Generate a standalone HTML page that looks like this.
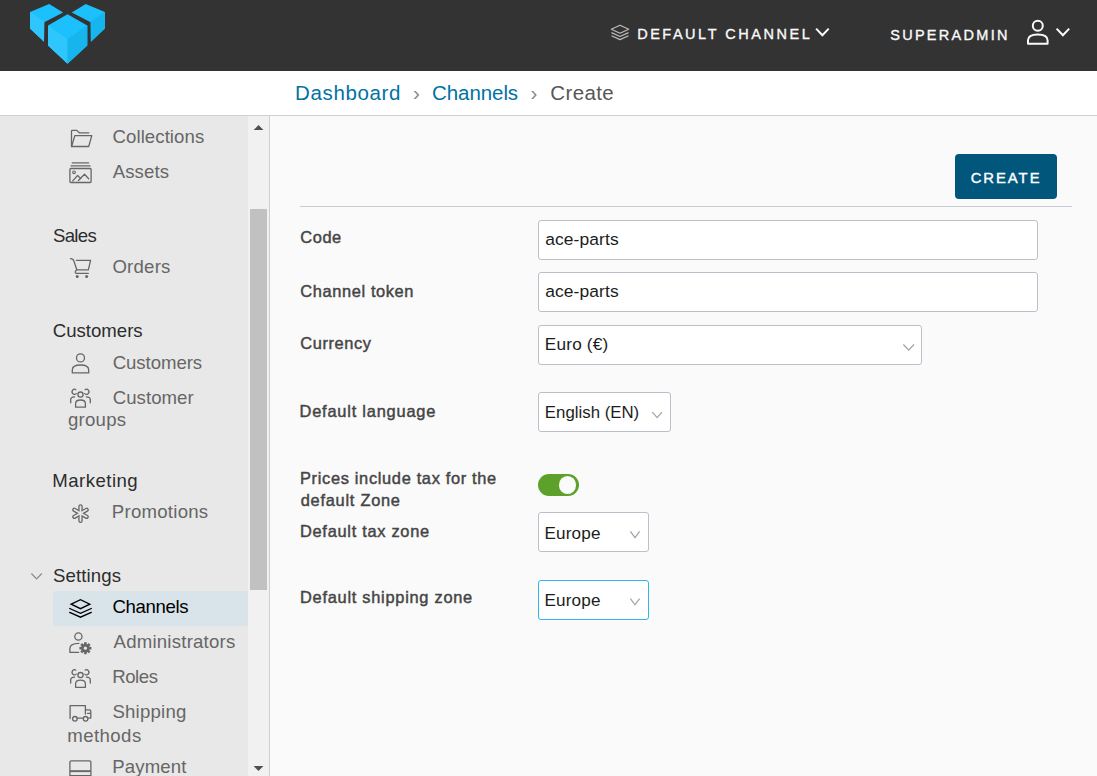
<!DOCTYPE html>
<html><head><meta charset="utf-8"><style>
html,body{margin:0;padding:0}
body{width:1097px;height:776px;overflow:hidden;position:relative;background:#fafafa;font-family:"Liberation Sans",sans-serif}
.abs{position:absolute}
.t{position:absolute;white-space:nowrap}
#hdr{position:absolute;left:0;top:0;width:1097px;height:71px;background:#333333}
#bc{position:absolute;left:0;top:71px;width:1097px;height:44px;background:#fff;border-bottom:1px solid #cfcfcf}
#side{position:absolute;left:0;top:116px;width:248px;height:660px;background:#e8e8e8}
#track{position:absolute;left:248px;top:116px;width:21px;height:660px;background:#f1f1f1}
#thumb{position:absolute;left:250px;top:209px;width:17px;height:381px;background:#c1c1c1}
#vline{position:absolute;left:269px;top:116px;width:1px;height:660px;background:#cfcfcf}
#active{position:absolute;left:53px;top:591px;width:195px;height:35px;background:#d8e3ea;border-radius:3px 0 0 3px}
.box{position:absolute;border:1px solid #babfc9;border-radius:3px;background:#fff}
</style></head><body>
<div id="hdr"></div>
<svg class="abs" style="left:0;top:0" width="120" height="70" viewBox="0 0 120 70">
<polygon points="30,12.1 49.2,4 63.1,12.4 44.25,22.3 44,41.8 30,28.5" fill="#1cc0fd"/>
<polygon points="30,12.1 44.25,21.6 44,41.8 30,28.5" fill="#2ec6fc"/>
<polygon points="104.9,12.1 85.7,4 71.8,12.4 90.65,22.3 90.9,41.8 104.9,28.5" fill="#1cc0fd"/>
<polygon points="104.9,12.1 90.65,21.6 90.9,41.8 104.9,28.5" fill="#17b5ee"/>
<polygon points="67.5,14.3 87.3,25.5 87.3,45.4 67.5,63.8 48,45.4 48,25.5" fill="#1cc0fd"/>
<polygon points="48,25.5 67.5,38.9 67.5,63.8 48,45.4" fill="#2ec6fc"/>
<polygon points="67.5,38.9 87.3,25.5 87.3,45.4 67.5,63.8" fill="#17b5ee"/>
</svg>
<div class="t" style="left:637.14px;top:24.48px;font-size:14.5px;line-height:20px;color:#fafafa;font-weight:400;letter-spacing:2.53px;-webkit-text-stroke:0.35px #fafafa">DEFAULT CHANNEL</div>
<div class="t" style="left:890.2px;top:24.96px;font-size:14.5px;line-height:20px;color:#fafafa;font-weight:400;letter-spacing:2.284px;-webkit-text-stroke:0.35px #fafafa">SUPERADMIN</div>
<svg class="abs" style="left:600px;top:0" width="497" height="70" viewBox="600 0 497 70">
<g fill="none" stroke="#bdbdbd" stroke-width="1.2" stroke-linejoin="round">
<polygon points="611.3,29.2 620,25.2 628.7,29.2 620,33.2"/>
<polyline points="611.5,32.6 620,36.5 628.5,32.6"/>
<polyline points="611.5,35.8 620,39.6 628.5,35.8"/>
</g>
<polyline points="816.1,28.6 822.4,35.2 828.7,28.6" fill="none" stroke="#fafafa" stroke-width="2"/>
<g fill="none" stroke="#fafafa" stroke-width="2">
<circle cx="1037.8" cy="25.8" r="5"/>
<path d="M1028,43.8 V40.3 Q1028,34.4 1037.8,34.4 Q1047.6,34.4 1047.6,40.3 V43.8 Z" stroke-linejoin="round"/>
<polyline points="1056.6,28.6 1062.9,35.2 1069.2,28.6"/>
</g>
</svg>
<div id="bc"></div>
<div class="t" style="left:295.08px;top:77.90px;font-size:20.5px;line-height:29px;color:#0072a3;font-weight:400;letter-spacing:0.63px;">Dashboard</div>
<div class="t" style="left:413px;top:77.90px;font-size:20.5px;line-height:29px;color:#888;font-weight:400;letter-spacing:0px;">›</div>
<div class="t" style="left:432.06px;top:77.90px;font-size:20.5px;line-height:29px;color:#0072a3;font-weight:400;letter-spacing:-0.08px;">Channels</div>
<div class="t" style="left:530.5px;top:77.90px;font-size:20.5px;line-height:29px;color:#888;font-weight:400;letter-spacing:0px;">›</div>
<div class="t" style="left:550.34px;top:77.90px;font-size:20.5px;line-height:29px;color:#565656;font-weight:400;letter-spacing:0.364px;">Create</div>
<div id="side"></div>
<div id="track"></div><div id="thumb"></div><div id="vline"></div>
<div id="active"></div>
<div class="t" style="left:112.56px;top:123.92px;font-size:18.6px;line-height:26px;color:#666666;font-weight:400;letter-spacing:0.07px;">Collections</div>
<div class="t" style="left:112.7px;top:158.70px;font-size:18.6px;line-height:26px;color:#666666;font-weight:400;letter-spacing:0.1px;">Assets</div>
<div class="t" style="left:52.92px;top:223.10px;font-size:18.6px;line-height:26px;color:#2d2d2d;font-weight:400;letter-spacing:-0.665px;">Sales</div>
<div class="t" style="left:112.42px;top:254.28px;font-size:18.6px;line-height:26px;color:#666666;font-weight:400;letter-spacing:0.224px;">Orders</div>
<div class="t" style="left:52.78px;top:317.90px;font-size:18.6px;line-height:26px;color:#2d2d2d;font-weight:400;letter-spacing:0.0px;">Customers</div>
<div class="t" style="left:112.7px;top:349.56px;font-size:18.6px;line-height:26px;color:#666666;font-weight:400;letter-spacing:-0.054px;">Customers</div>
<div class="t" style="left:112.7px;top:384.56px;font-size:18.6px;line-height:26px;color:#666666;font-weight:400;letter-spacing:0.06px;">Customer</div>
<div class="t" style="left:68.06px;top:407.10px;font-size:18.6px;line-height:26px;color:#666666;font-weight:400;letter-spacing:0.224px;">groups</div>
<div class="t" style="left:52.22px;top:468.34px;font-size:18.6px;line-height:26px;color:#2d2d2d;font-weight:400;letter-spacing:0.472px;">Marketing</div>
<div class="t" style="left:111.86px;top:499.26px;font-size:18.6px;line-height:26px;color:#666666;font-weight:400;letter-spacing:0.248px;">Promotions</div>
<div class="t" style="left:52.92px;top:562.98px;font-size:18.6px;line-height:26px;color:#2d2d2d;font-weight:400;letter-spacing:0.14px;">Settings</div>
<div class="t" style="left:112.56px;top:593.50px;font-size:18.6px;line-height:26px;color:#000;font-weight:400;letter-spacing:-0.38px;">Channels</div>
<div class="t" style="left:113.54px;top:628.66px;font-size:18.6px;line-height:26px;color:#666666;font-weight:400;letter-spacing:0.226px;">Administrators</div>
<div class="t" style="left:112.14px;top:663.86px;font-size:18.6px;line-height:26px;color:#666666;font-weight:400;letter-spacing:-0.42px;">Roles</div>
<div class="t" style="left:112.42px;top:699.08px;font-size:18.6px;line-height:26px;color:#666666;font-weight:400;letter-spacing:0.22px;">Shipping</div>
<div class="t" style="left:67.22px;top:722.74px;font-size:18.6px;line-height:26px;color:#666666;font-weight:400;letter-spacing:0.443px;">methods</div>
<div class="t" style="left:112.3px;top:753.70px;font-size:18.6px;line-height:26px;color:#666666;font-weight:400;letter-spacing:0.12px;">Payment</div>
<svg class="abs" style="left:0;top:116px" width="270" height="660" viewBox="0 116 270 660">
<g fill="none" stroke="#666666" stroke-width="1.3" stroke-linejoin="round" stroke-linecap="round">
<!-- folder -->
<path d="M71.5,146.5 V131.2 Q71.5,130.4 72.3,130.4 H76.8 L79.3,132.8 H88.8"/>
<path d="M71.6,146.5 L74.8,135.6 H91.8 L88.7,146.5 Z"/>
<!-- assets -->
<line x1="72.3" y1="162.9" x2="88.6" y2="162.9"/>
<line x1="71.1" y1="165.9" x2="90.1" y2="165.9"/>
<rect x="69.9" y="168.5" width="21.2" height="14" rx="1"/>
<circle cx="74" cy="172.3" r="1.35" stroke-width="1.1"/>
<polyline points="72.7,180.9 77.6,175.5 80.8,178.6"/>
<polyline points="78.4,180.5 84.5,174.3 88.7,178.8"/>
<!-- cart -->
<path d="M70.4,258.6 Q73.2,258.6 73.9,261 L76.8,269.8 H88.3 L90.6,260.3 H76.4"/>
<path d="M76.8,269.8 Q75.2,270.8 75.3,272.2 Q75.4,273.3 76.2,273.3 H88.3"/>
<!-- customer -->
<circle cx="80.5" cy="357.9" r="4"/>
<path d="M72.3,372.9 V369.9 Q72.3,365 80.5,365 Q88.7,365 88.7,369.9 V372.9 Z"/>
<!-- groups -->
<circle cx="80.5" cy="394.6" r="2.6"/>
<path d="M75.6,407.2 V403.6 Q75.6,400 80.5,400 Q85.4,400 85.4,403.6 V407.2 Z"/>
<path d="M76.3,393.6 A2.5,2.5 0 1 1 75.8,389.6"/>
<path d="M84.7,393.6 A2.5,2.5 0 1 0 85.2,389.6"/>
<path d="M70.7,402.8 V399.5 Q70.7,397 74.6,396.8"/>
<path d="M90.3,402.8 V399.5 Q90.3,397 86.4,396.8"/>
<!-- truck -->
<path d="M70.1,718.5 V705.6 H85.4 V714"/>
<path d="M85.4,709.9 H89.3 Q90.8,709.9 90.8,711.4 V718.1 H88"/>
<line x1="87.5" y1="713.3" x2="90.4" y2="713.3"/>
<line x1="77.3" y1="718.1" x2="83.2" y2="718.1"/>
<circle cx="74.9" cy="718.8" r="2.3"/>
<circle cx="85.6" cy="718.8" r="2.3"/>
<!-- admin -->
<circle cx="78.4" cy="636.5" r="3.6"/>
<path d="M78.8,643.4 Q69.9,643.6 69.9,648.5 V652.4 H78.6"/>
<!-- roles -->
<g transform="translate(0,-1.9)">
<circle cx="80.5" cy="677" r="2.6"/>
<path d="M75.6,689.2 V685.6 Q75.6,682 80.5,682 Q85.4,682 85.4,685.6 V689.2 Z"/>
<path d="M76.3,676 A2.5,2.5 0 1 1 75.8,672"/>
<path d="M84.7,676 A2.5,2.5 0 1 0 85.2,672"/>
<path d="M70.7,685 V681.7 Q70.7,679.2 74.6,679"/>
<path d="M90.3,685 V681.7 Q90.3,679.2 86.4,679"/>
</g>
<!-- payment -->
<rect x="69.9" y="760.8" width="21" height="20" rx="1.5"/>
</g>
<g fill="#666666">
<circle cx="77.2" cy="276.6" r="1.5"/>
<circle cx="86.6" cy="276.6" r="1.5"/>
<rect x="69.9" y="770.2" width="21" height="1.9"/>
<rect x="69.9" y="775" width="21" height="2"/>
</g>
<!-- asterisk -->
<g stroke="#666666" stroke-width="4.4" stroke-linecap="round">
<line x1="80.5" y1="506.4" x2="80.5" y2="520.8"/>
<line x1="74.4" y1="509.8" x2="86.6" y2="516.8"/>
<line x1="74.4" y1="516.8" x2="86.6" y2="509.8"/>
</g>
<g stroke="#e8e8e8" stroke-width="1.8" stroke-linecap="round">
<line x1="80.5" y1="506.4" x2="80.5" y2="520.8"/>
<line x1="74.4" y1="509.8" x2="86.6" y2="516.8"/>
<line x1="74.4" y1="516.8" x2="86.6" y2="509.8"/>
</g>
<!-- gear -->
<g transform="translate(85.4,648.2)">
<circle r="4.2" fill="#666666"/>
<g fill="#666666">
<rect x="-1.3" y="-6" width="2.6" height="12"/>
<rect x="-1.3" y="-6" width="2.6" height="12" transform="rotate(45)"/>
<rect x="-1.3" y="-6" width="2.6" height="12" transform="rotate(90)"/>
<rect x="-1.3" y="-6" width="2.6" height="12" transform="rotate(135)"/>
</g>
<circle r="1.6" fill="#e8e8e8"/>
</g>
<!-- settings chevron -->
<polyline points="31.4,573.5 36.6,578.9 41.8,573.5" fill="none" stroke="#8a8a8a" stroke-width="1.2"/>
<!-- channels layers (active) -->
<g fill="none" stroke="#000" stroke-width="1.35" stroke-linejoin="miter" stroke-linecap="round" stroke-miterlimit="10">
<polygon points="71.2,604.2 80.5,599.7 89.8,604.2 80.5,608.7"/>
<polyline points="69.7,608.5 80.5,613.3 91.3,608.5"/>
<polyline points="69.7,612.4 80.5,617.2 91.3,612.4"/>
</g>
<!-- scroll arrows -->
<polygon points="253.6,130.1 258.5,124.9 263.4,130.1" fill="#505050"/>
<polygon points="253.6,766 263.4,766 258.5,771" fill="#505050"/>
</svg>
<div class="abs" style="left:955px;top:154px;width:102px;height:45px;background:#01567b;border-radius:4px"></div>
<div class="t" style="left:970.64px;top:167.72px;font-size:14.8px;line-height:21px;color:#fff;font-weight:400;letter-spacing:1.99px;-webkit-text-stroke:0.4px #fff">CREATE</div>
<div class="abs" style="left:300px;top:206px;width:772px;height:1px;background:#c5cad3"></div>
<div class="t" style="left:300.28px;top:226.28px;font-size:16.4px;line-height:23px;color:#454545;font-weight:400;letter-spacing:0.59px;-webkit-text-stroke:0.45px #454545">Code</div>
<div class="t" style="left:300.28px;top:279.94px;font-size:16.4px;line-height:23px;color:#454545;font-weight:400;letter-spacing:0.625px;-webkit-text-stroke:0.45px #454545">Channel token</div>
<div class="t" style="left:300.28px;top:332.04px;font-size:16.4px;line-height:23px;color:#454545;font-weight:400;letter-spacing:0.59px;-webkit-text-stroke:0.45px #454545">Currency</div>
<div class="t" style="left:299.58px;top:400.10px;font-size:16.4px;line-height:23px;color:#454545;font-weight:400;letter-spacing:0.786px;-webkit-text-stroke:0.45px #454545">Default language</div>
<div class="t" style="left:300.0px;top:466.68px;font-size:16.4px;line-height:23px;color:#454545;font-weight:400;letter-spacing:0.67px;-webkit-text-stroke:0.45px #454545">Prices include tax for the</div>
<div class="t" style="left:300.7px;top:489.18px;font-size:16.4px;line-height:23px;color:#454545;font-weight:400;letter-spacing:0.743px;-webkit-text-stroke:0.45px #454545">default Zone</div>
<div class="t" style="left:300.0px;top:519.98px;font-size:16.4px;line-height:23px;color:#454545;font-weight:400;letter-spacing:0.711px;-webkit-text-stroke:0.45px #454545">Default tax zone</div>
<div class="t" style="left:300.0px;top:586.42px;font-size:16.4px;line-height:23px;color:#454545;font-weight:400;letter-spacing:0.729px;-webkit-text-stroke:0.45px #454545">Default shipping zone</div>
<div class="box" style="left:538px;top:220px;width:498px;height:38px;border-color:#babfc9"></div>
<div class="box" style="left:538px;top:272px;width:498px;height:38px;border-color:#babfc9"></div>
<div class="box" style="left:538px;top:325px;width:382px;height:38px;border-color:#babfc9"></div>
<div class="box" style="left:538px;top:392px;width:131px;height:38px;border-color:#babfc9"></div>
<div class="box" style="left:538px;top:512px;width:109px;height:38px;border-color:#babfc9"></div>
<div class="box" style="left:538px;top:580px;width:109px;height:38px;border-color:#35b3ec"></div>
<div class="t" style="left:545.28px;top:226.70px;font-size:17.4px;line-height:24px;color:#1c1c1c;font-weight:400;letter-spacing:0.105px;">ace-parts</div>
<div class="t" style="left:545.28px;top:279.20px;font-size:17.4px;line-height:24px;color:#1c1c1c;font-weight:400;letter-spacing:0.105px;">ace-parts</div>
<div class="t" style="left:544.86px;top:332.48px;font-size:17.2px;line-height:24px;color:#1c1c1c;font-weight:400;letter-spacing:0.18px;">Euro (€)</div>
<div class="t" style="left:544.86px;top:401.00px;font-size:16.8px;line-height:24px;color:#1c1c1c;font-weight:400;letter-spacing:0.012px;">English (EN)</div>
<div class="t" style="left:544.44px;top:521.92px;font-size:17.1px;line-height:24px;color:#1c1c1c;font-weight:400;letter-spacing:0.168px;">Europe</div>
<div class="t" style="left:544.44px;top:588.72px;font-size:17.1px;line-height:24px;color:#1c1c1c;font-weight:400;letter-spacing:0.168px;">Europe</div>
<svg class="abs" style="left:0;top:0" width="1097" height="776" viewBox="0 0 1097 776"><g fill="none" stroke="#a3a3a3" stroke-width="1.25"><polyline points="903.4,344.5 908.7,350.2 914,344.5"/><polyline points="652.3,412.2 657.15,417.6 662,412.2"/><polyline points="630.4,531.4 635.0,537.6 639.6,531.4"/><polyline points="630.4,598.6 635.0,604.8 639.6,598.6"/></g></svg>
<div class="abs" style="left:538px;top:474px;width:41px;height:22px;border-radius:11px;background:#5da12a"></div>
<div class="abs" style="left:558.8px;top:476.1px;width:17.4px;height:17.6px;border-radius:50%;background:#fafafa"></div>
</body></html>
